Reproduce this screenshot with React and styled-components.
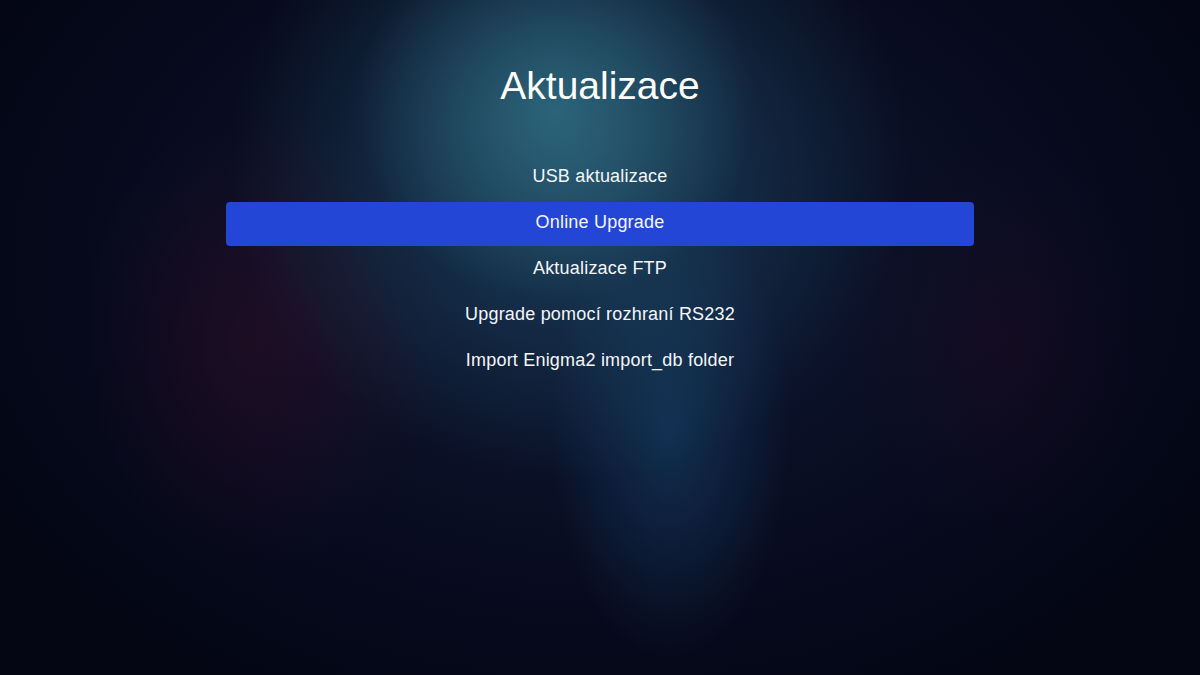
import React from "react"
import styled, { createGlobalStyle } from "styled-components"

const GlobalStyle = createGlobalStyle`
  html, body {
    margin: 0;
    padding: 0;
    background: #060818;
  }
  body {
    font-family: "Liberation Sans", Arial, sans-serif;
  }
`

const Screen = styled.div`
  width: 1200px;
  height: 675px;
  overflow: hidden;
  display: flex;
  flex-direction: column;
  align-items: center;
  color: #ffffff;
  background:
    radial-gradient(ellipse 200px 190px at 555px 110px, rgba(52, 118, 138, 0.7), rgba(52, 118, 138, 0) 100%),
    radial-gradient(ellipse 340px 320px at 570px 160px, rgba(34, 86, 112, 0.65), rgba(34, 86, 112, 0) 100%),
    radial-gradient(ellipse 120px 230px at 670px 430px, rgba(22, 70, 112, 0.55), rgba(22, 70, 112, 0) 100%),
    radial-gradient(ellipse 180px 230px at 260px 340px, rgba(62, 12, 36, 0.4), rgba(62, 12, 36, 0) 100%),
    radial-gradient(ellipse 150px 200px at 1000px 340px, rgba(50, 12, 36, 0.28), rgba(50, 12, 36, 0) 100%),
    radial-gradient(ellipse 700px 500px at 600px 260px, #0f1a36, #070a1d 70%, #040614 100%);
`

const Title = styled.h1`
  margin: 62px 0 0;
  font-size: 39px;
  line-height: 48px;
  font-weight: 400;
  letter-spacing: 0;
`

const Menu = styled.ul`
  list-style: none;
  margin: 46px 0 0;
  padding: 0;
  width: 748px;
  display: flex;
  flex-direction: column;
  gap: 2px;
`

const Item = styled.li`
  height: 44px;
  box-sizing: border-box;
  padding-bottom: 3px;
  display: flex;
  align-items: center;
  justify-content: center;
  font-size: 18px;
  letter-spacing: 0.2px;
  border-radius: 4px;
  background: ${p => (p.$active ? "#2346d6" : "transparent")};
  color: #f4f6fa;
`

const items = [
  "USB aktualizace",
  "Online Upgrade",
  "Aktualizace FTP",
  "Upgrade pomocí rozhraní RS232",
  "Import Enigma2 import_db folder",
]

export default function App() {
  return (
    <Screen>
      <GlobalStyle />
      <Title>Aktualizace</Title>
      <Menu>
        {items.map((label, i) => (
          <Item key={label} $active={i === 1}>
            {label}
          </Item>
        ))}
      </Menu>
    </Screen>
  )
}
